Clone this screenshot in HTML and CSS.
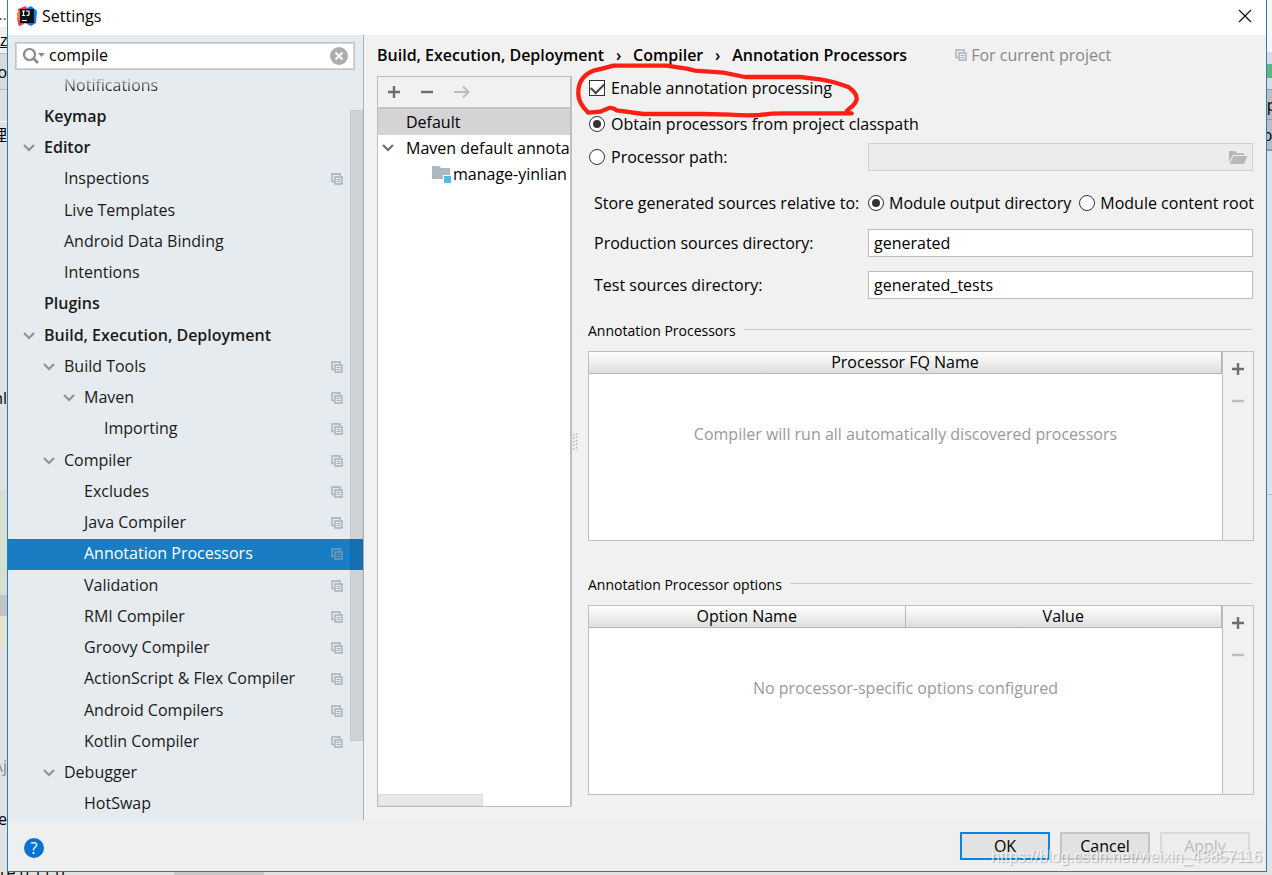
FILE: index.html
```html
<!DOCTYPE html>
<html lang="en">
<head>
<meta charset="utf-8">
<title>Settings</title>
<link rel="stylesheet" href="styles.css">
</head>
<body>
<svg class="defs" aria-hidden="true">
  <symbol id="copy" viewBox="0 0 12 12"><path d="M3 8.500H1V1H9V3" fill="none" stroke="currentColor" stroke-width="1.400"/><path d="M4 4H11V11H4Z" fill="none" stroke="currentColor" stroke-width="1.400"/><path d="M5.500 6.500H9.500M5.500 8.500H9.500" stroke="currentColor"/></symbol>
  <symbol id="chev" viewBox="0 0 12 8"><path d="M1 1L6 6L11 1" fill="none" stroke="currentColor" stroke-width="2.200"/></symbol>
  <symbol id="plus" viewBox="0 0 14 14"><path d="M7 1V13M1 7H13" stroke="currentColor" stroke-width="2.400"/></symbol>
  <symbol id="minus" viewBox="0 0 14 14"><path d="M1 7H13" stroke="currentColor" stroke-width="2.400"/></symbol>
</svg>
<div class="desktop">
  <div class="edge left" aria-hidden="true">
    <div class="seg s1">..</div><div class="seg s2">ze</div><div class="seg s3">o</div><div class="seg s4"></div><div class="seg s5">理</div>
    <div class="seg s6">nl</div><div class="seg s7"></div><div class="seg s8"></div><div class="seg s9"></div><div class="seg s10">\j</div><div class="seg s11">e</div>
  </div>
  <main class="window">
    <header class="titlebar">
      <svg class="logo" viewBox="0 0 20 20"><path d="M1 3L9 0L12 8L7 18L2 20L0 13L2 9Z" fill="#fe315d"/><path d="M0 7L5 5V16L1 15Z" fill="#f97a12"/><path d="M10 2L14 0L20 5L19 17L14 20L8 17Z" fill="#087cfa"/><path d="M1 15L6 13L8 17L2 20Z" fill="#fe315d"/><path d="M3 3H17V17H3Z" fill="#111"/><path d="M5 5H8M6.500 5V9.500M5 9.500H8M9 5H12V8.500Q12 9.500 9.500 9.500M5 14.500H10" fill="none" stroke="#fff" stroke-width="1.200"/></svg>
      <h1>Settings</h1>
      <button class="close" aria-label="Close"><svg viewBox="0 0 14 14"><path d="M1 1L13 13M13 1L1 13" stroke="#111" stroke-width="1.200"/></svg></button>
    </header>
    <div class="content">
      <nav class="sidebar" aria-label="Settings categories">
        <div class="search">
          <svg class="glass" viewBox="0 0 24 18"><circle cx="7.500" cy="7.500" r="5.500" fill="none" stroke="#8c8c8c" stroke-width="2.200"/><path d="M11.500 11.500L16 16" stroke="#8c8c8c" stroke-width="2.600"/><path d="M16 6H23L19.500 10Z" fill="#8c8c8c"/></svg>
          <input type="text" value="compile" aria-label="Search settings">
          <button class="clear" aria-label="Clear search"><svg viewBox="0 0 18 18"><circle cx="9" cy="9" r="9" fill="#adadad"/><path d="M5.500 5.500L12.500 12.500M12.500 5.500L5.500 12.500" stroke="#fff" stroke-width="2"/></svg></button>
        </div>
        <ul class="tree">
          <li class="l2 cut"><a href="#">Notifications</a></li>
          <li class="l1"><a href="#">Keymap</a></li>
          <li class="l1"><svg class="chev"><use href="#chev"/></svg><a href="#">Editor</a></li>
          <li class="l2"><a href="#">Inspections</a><svg class="copy"><use href="#copy"/></svg></li>
          <li class="l2"><a href="#">Live Templates</a></li>
          <li class="l2"><a href="#">Android Data Binding</a></li>
          <li class="l2"><a href="#">Intentions</a></li>
          <li class="l1"><a href="#">Plugins</a></li>
          <li class="l1"><svg class="chev"><use href="#chev"/></svg><a href="#">Build, Execution, Deployment</a></li>
          <li class="l2"><svg class="chev"><use href="#chev"/></svg><a href="#">Build Tools</a><svg class="copy"><use href="#copy"/></svg></li>
          <li class="l3"><svg class="chev"><use href="#chev"/></svg><a href="#">Maven</a><svg class="copy"><use href="#copy"/></svg></li>
          <li class="l4"><a href="#">Importing</a><svg class="copy"><use href="#copy"/></svg></li>
          <li class="l2"><svg class="chev"><use href="#chev"/></svg><a href="#">Compiler</a><svg class="copy"><use href="#copy"/></svg></li>
          <li class="l3"><a href="#">Excludes</a><svg class="copy"><use href="#copy"/></svg></li>
          <li class="l3"><a href="#">Java Compiler</a><svg class="copy"><use href="#copy"/></svg></li>
          <li class="l3 selected"><a href="#" aria-current="page">Annotation Processors</a><svg class="copy"><use href="#copy"/></svg></li>
          <li class="l3"><a href="#">Validation</a><svg class="copy"><use href="#copy"/></svg></li>
          <li class="l3"><a href="#">RMI Compiler</a><svg class="copy"><use href="#copy"/></svg></li>
          <li class="l3"><a href="#">Groovy Compiler</a><svg class="copy"><use href="#copy"/></svg></li>
          <li class="l3"><a href="#">ActionScript &amp; Flex Compiler</a><svg class="copy"><use href="#copy"/></svg></li>
          <li class="l3"><a href="#">Android Compilers</a><svg class="copy"><use href="#copy"/></svg></li>
          <li class="l3"><a href="#">Kotlin Compiler</a><svg class="copy"><use href="#copy"/></svg></li>
          <li class="l2"><svg class="chev"><use href="#chev"/></svg><a href="#">Debugger</a></li>
          <li class="l3"><a href="#">HotSwap</a></li>
        </ul>
        <div class="scrollbar"></div>
      </nav>
      <section class="page">
        <div class="crumbs">
          <b>Build, Execution, Deployment</b><span class="sep">›</span><b>Compiler</b><span class="sep">›</span><b>Annotation Processors</b>
          <span class="scope"><svg class="copy"><use href="#copy"/></svg>For current project</span>
        </div>
        <div class="split">
          <div class="profiles">
            <div class="tools">
              <button aria-label="Add"><svg><use href="#plus"/></svg></button>
              <button aria-label="Remove"><svg><use href="#minus"/></svg></button>
              <button aria-label="Move to" disabled><svg class="arrow" viewBox="0 0 18 14"><path d="M1 7H15M10 1.500L15.500 7L10 12.500" fill="none" stroke="currentColor" stroke-width="2"/></svg></button>
            </div>
            <ul class="plist">
              <li class="on"><span>Default</span></li>
              <li><svg class="chev dark"><use href="#chev"/></svg><span class="clip">Maven default annotation</span></li>
              <li class="module"><svg class="folder" viewBox="0 0 20 18"><path d="M0 1H7L9 3H18V10H11V14H0Z" fill="#adb8c0"/><path d="M12 11H19V18H12Z" fill="#4fbbe4"/></svg><span>manage-yinlian</span></li>
            </ul>
            <div class="hscroll"></div>
          </div>
          <div class="grip"><svg viewBox="0 0 6 18"><path d="M1.500 1V18M4.500 0V18" stroke="#b4b4b4" stroke-width="1.500" stroke-dasharray="1.500 2"/></svg></div>
          <form class="details">
            <label class="opt"><input type="checkbox" checked>Enable annotation processing</label>
            <label class="opt obtain"><input type="radio" name="source" checked>Obtain processors from project classpath</label>
            <div class="row path">
              <label class="opt"><input type="radio" name="source">Processor path:</label>
              <div class="browse"><input type="text" aria-label="Processor path" disabled><svg viewBox="0 0 20 15"><path d="M1 1H7L9 3H16V5H5L1 12Z" fill="#b5babd"/><path d="M5.500 6H19.500L16 14H1.500Z" fill="#b5babd"/></svg></div>
            </div>
            <div class="row store">
              <span class="lead">Store generated sources relative to:</span>
              <div class="radios"><label class="opt"><input type="radio" name="store" checked>Module output directory</label><label class="opt"><input type="radio" name="store">Module content root</label></div>
            </div>
            <div class="row"><label class="lead" for="prod">Production sources directory:</label><input class="field" id="prod" type="text" value="generated"></div>
            <div class="row"><label class="lead" for="test">Test sources directory:</label><input class="field" id="test" type="text" value="generated_tests"></div>
            <section class="group">
              <h2>Annotation Processors</h2>
              <div class="frame">
                <table><thead><tr><th>Processor FQ Name</th></tr></thead><tbody><tr><td>Compiler will run all automatically discovered processors</td></tr></tbody></table>
                <div class="side"><button type="button" aria-label="Add processor"><svg><use href="#plus"/></svg></button><button type="button" aria-label="Remove processor" disabled><svg><use href="#minus"/></svg></button></div>
              </div>
            </section>
            <section class="group second">
              <h2>Annotation Processor options</h2>
              <div class="frame">
                <table><thead><tr><th>Option Name</th><th>Value</th></tr></thead><tbody><tr><td colspan="2">No processor-specific options configured</td></tr></tbody></table>
                <div class="side"><button type="button" aria-label="Add option"><svg><use href="#plus"/></svg></button><button type="button" aria-label="Remove option" disabled><svg><use href="#minus"/></svg></button></div>
              </div>
            </section>
            <svg class="marker" viewBox="0 60 900 180" aria-hidden="true"><path d="M845 220H640Q600 220 570 225Q530 228 480 224L400 222H220L140 211Q128 202 118 204L90 215L55 218Q22 186 25 155Q26 110 70 92Q100 86 130 77H290L350 86L375 92L460 98L525 111H690L750 118Q790 124 835 141Q862 160 860 178Q856 194 840 204L830 214" fill="none" stroke="#ff1f14" stroke-width="13" stroke-linejoin="round" stroke-linecap="round"/></svg>
          </form>
        </div>
      </section>
    </div>
    <footer class="footer">
      <button class="help" aria-label="Help">?</button>
      <button class="btn primary">OK</button>
      <button class="btn">Cancel</button>
      <button class="btn" disabled>Apply</button>
      <span class="watermark">https://blog.csdn.net/weixin_43857116</span>
    </footer>
  </main>
  <div class="edge right" aria-hidden="true">
    <div class="seg r1"></div><div class="seg r2"></div><div class="seg r3">lp</div><div class="seg r4">ol</div><div class="seg r5"></div><div class="seg r6"></div>
  </div>
</div>
<div class="under" aria-hidden="true"><span>re.0.11.0</span></div>
</body>
</html>
```
FILE: styles.css
```css
* { box-sizing: border-box; }
body {
  margin: 0;
  height: 100vh;
  display: flex;
  flex-direction: column;
  background: #e2e2e2;
  color: #000;
  font: 16px/24px "Open Sans", "Noto Sans", "Noto Sans CJK SC", sans-serif;
  overflow: hidden;
}
button, input { font: inherit; color: inherit; margin: 0; }
button { border: 0; padding: 0; background: none; display: flex; align-items: center; justify-content: center; }
ul { list-style: none; margin: 0; padding: 0; }
svg { display: block; flex: none; }
a { color: inherit; text-decoration: none; }
b { font-weight: 600; }
.defs { position: absolute; width: 0; height: 0; }

.desktop { flex: 1; min-height: 0; display: flex; }
.under { height: 3px; overflow: hidden; background: linear-gradient(90deg, #e2e2e2 174px, #c8c8c8 174px, #c8c8c8 264px, #e2e2e2 264px); }
.under span { display: block; line-height: 0; }

.edge { display: flex; flex-direction: column; overflow: hidden; }
.left { width: 7px; }
.right { width: 5px; }
.seg { display: flex; justify-content: flex-end; align-items: center; overflow: hidden; white-space: nowrap; }
.s1 { height: 27px; background: #fff; color: #a33; }
.s2 { height: 26px; background: #f0f0f0; text-decoration: underline; justify-content: flex-start; }
.s3 { height: 37px; background: #dadada; border-top: 1px solid #bbb; border-bottom: 1px solid #bbb; }
.s4 { height: 32px; background: #dedede; border-bottom: 1px solid #fff; }
.s5 { height: 26px; }
.s6 { height: 342px; padding-bottom: 26px; padding-top: 184px; }
.s7 { height: 105px; background: #d5e0d1; }
.s8 { height: 21px; background: #c4c4c4; }
.s9 { height: 31px; background: #e4e4cd; }
.s10 { flex: 1; color: #888; padding-top: 78px; }
.s11 { height: 26px; margin-bottom: 40px; }
.r1 { height: 52px; background: #f7f7f7; }
.r2 { height: 37px; background: linear-gradient(#dcdcdc 12px, #62b477 12px, #62b477 26px, #dcdcdc 26px); }
.r3 { height: 30px; background: #bdbdbd; border-top: 1px solid #999; justify-content: center; }
.r4 { height: 32px; background: #bdbdbd; border-top: 1px solid #999; border-bottom: 2px solid #999; justify-content: center; }
.r5 { height: 344px; border-bottom: 1px solid #bbb; }
.r6 { flex: 1; }

.window {
  flex: 1;
  min-width: 0;
  display: flex;
  flex-direction: column;
  border: 1px solid #1a80cf;
  border-top: 0;
  background: #f1f1f1;
}
.titlebar { height: 35px; display: flex; align-items: center; padding: 0 14px 3px 9px; background: #fff; }
.logo { width: 20px; height: 20px; margin-right: 5px; }
h1 { margin: 0; flex: 1; font-size: 16px; font-weight: 400; }
.close svg { width: 14px; height: 14px; }

.content { flex: 1; min-height: 0; display: flex; }
.sidebar { position: relative; width: 356px; flex: none; display: flex; flex-direction: column; padding-top: 7px; background: #e6ebef; border-right: 1px solid #b0b0b0; color: #1a1a1a; }
.search { height: 28px; flex: none; margin: 0 8px 0 7px; display: flex; align-items: center; padding: 0 6px; background: #fff; border: 1px solid #bfc3c6; outline: 1px solid #d5d9dc; outline-offset: -2px; }
.glass { width: 24px; height: 18px; }
.search input { flex: 1; min-width: 0; height: 24px; border: 0; padding: 0 0 2px 3px; background: none; outline: 0; color: #000; }
.clear svg { width: 18px; height: 18px; }
.tree { flex: 1; min-height: 0; display: flex; flex-direction: column; }
.tree li { position: relative; flex: 1 1 0; min-height: 0; display: flex; align-items: center; padding-right: 20px; }
.tree a { flex: 1; white-space: nowrap; padding-bottom: 2px; }
.cut a { background: linear-gradient(#b9bcc0 6px, #1a1a1a 18px); background-clip: text; color: transparent; }
.l1 { padding-left: 36px; font-weight: 600; }
.l2 { padding-left: 56px; }
.l3 { padding-left: 76px; }
.l4 { padding-left: 96px; }
.chev { width: 12px; height: 8px; margin: 0 9px 0 -21px; color: #8e9296; }
.copy { width: 12px; height: 12px; color: #a6b0b8; }
.selected { background: #1a7cc3; color: #fff; }
.selected .copy { color: #6ba0c4; }
.scrollbar { position: absolute; right: 0; top: 75px; bottom: 79px; width: 13px; background: rgb(0 0 0 / 10%); border: 1px solid rgb(0 0 0 / 4%); }

.page { flex: 1; min-width: 0; display: flex; flex-direction: column; padding: 8px 12px 13px 13px; }
.crumbs { height: 33px; display: flex; align-items: flex-start; white-space: nowrap; }
.sep { width: 29px; text-align: center; font-weight: 600; }
.scope { display: flex; align-items: center; gap: 4px; margin-left: 48px; color: #878787; }
.split { flex: 1; min-height: 0; display: flex; }
.profiles { width: 195px; flex: none; display: flex; flex-direction: column; background: #fff; border: 1px solid #bfbfbf; border-right-width: 2px; overflow: hidden; }
.tools { height: 32px; display: flex; align-items: center; gap: 19px; padding-left: 9px; background: #f1f1f1; border-bottom: 2px solid #c4c4c4; color: #6e6e6e; }
.tools svg, .side svg { width: 14px; height: 14px; }
.tools .arrow { width: 18px; }
button:disabled { color: #bcbcbc; }
.plist { flex: 1; }
.plist li { height: 26px; display: flex; align-items: center; padding-left: 28px; white-space: nowrap; }
.plist .on { background: #d4d4d4; }
.plist .clip { min-width: 0; overflow: hidden; }
.plist .chev { margin: 0 12px 0 -24px; color: #6e6e6e; }
.plist .module { padding-left: 54px; }
.folder { width: 20px; height: 18px; margin-right: 1px; }
.hscroll { width: 105px; height: 12px; background: #e8e8e8; border: 1px solid #dcdcdc; }
.grip { width: 16px; flex: none; display: flex; align-items: center; }
.grip svg { width: 6px; height: 18px; }

.details { position: relative; flex: 1; min-width: 0; display: flex; flex-direction: column; }
.opt { display: flex; align-items: center; gap: 6px; white-space: nowrap; }
.opt input { appearance: none; width: 16px; height: 16px; flex: none; margin: 0 0 0 1px; background: #fff; border: 1px solid #333; display: grid; place-items: center; }
.opt input[type="radio"] { border-radius: 50%; }
.opt input[type="radio"]:checked::after { content: ""; width: 8px; height: 8px; border-radius: 50%; background: #333; }
.opt input[type="checkbox"]:checked::after { content: ""; width: 11px; height: 6px; margin-bottom: 3px; border: solid #444; border-width: 0 0 2px 2px; rotate: -45deg; }
.obtain { margin-top: 12px; }
.row { display: grid; grid-template-columns: 280px minmax(0, 1fr); align-items: center; margin-top: 14px; padding-right: 1px; }
.path { margin-top: 7px; }
.store { height: 24px; margin-top: 20px; }
.lead { padding-left: 6px; white-space: nowrap; }
.field, .browse input { width: 100%; height: 28px; padding: 0 5px; background: #fff; border: 1px solid #bdbdbd; border-radius: 0; outline: 0; }
.browse { position: relative; }
.browse input { display: block; background: #ececec; border-color: #d0d0d0; }
.browse svg { position: absolute; right: 5px; top: 7px; width: 20px; height: 15px; }
.radios { display: flex; gap: 8px; }
.radios .opt { gap: 5px; }
.radios .opt input { margin-left: 0; }

.group { flex: 1; min-height: 0; display: flex; flex-direction: column; gap: 8px; margin-top: 20px; }
.second { margin: 32px 0 12px; }
h2 { margin: 0; display: flex; gap: 8px; font-size: 14px; font-weight: 400; line-height: 24px; }
h2::after { content: ""; flex: 1; height: 1px; margin: 10px 2px 0 0; background: #cacaca; }
.frame { flex: 1; min-height: 0; display: flex; border: 1px solid #bfbfbf; }
table { flex: 1; height: 100%; border-collapse: separate; border-spacing: 0; table-layout: fixed; background: #fff; }
th { width: 50%; height: 22px; padding: 0; font-weight: 400; line-height: 21px; background: linear-gradient(#fff, #dedede); border-bottom: 1px solid #b5b5b5; border-right: 1px solid #b5b5b5; }
td { padding: 48px 0 0; text-align: center; vertical-align: top; color: #999; height: 100%; }
.side { width: 31px; display: flex; flex-direction: column; align-items: center; gap: 18px; padding-top: 10px; border-left: 1px solid #bfbfbf; color: #6e6e6e; }
.marker { position: absolute; left: -18px; top: -16px; width: 300px; height: 60px; pointer-events: none; }

.footer { position: relative; height: 51px; display: flex; align-items: center; gap: 10px; padding: 0 16px 0 16px; background: #efefef; }
.help { width: 20px; height: 20px; margin: 5px auto 0 0; border-radius: 50%; background: #0872d3; color: #fff; }
.btn { width: 90px; height: 28px; background: #e2e2e2; border: 2px solid #c4c4c4; }
.btn.primary { border: 2px solid #0a84e0; }
.btn:disabled { background: #ededed; border-color: #dadada; }
.watermark { position: absolute; right: 4px; bottom: 2px; font: 16px/24px "Liberation Sans", Arial, sans-serif; color: rgb(255 255 255 / 75%); text-shadow: 1px 1px 1px rgb(0 0 0 / 25%); }
```
